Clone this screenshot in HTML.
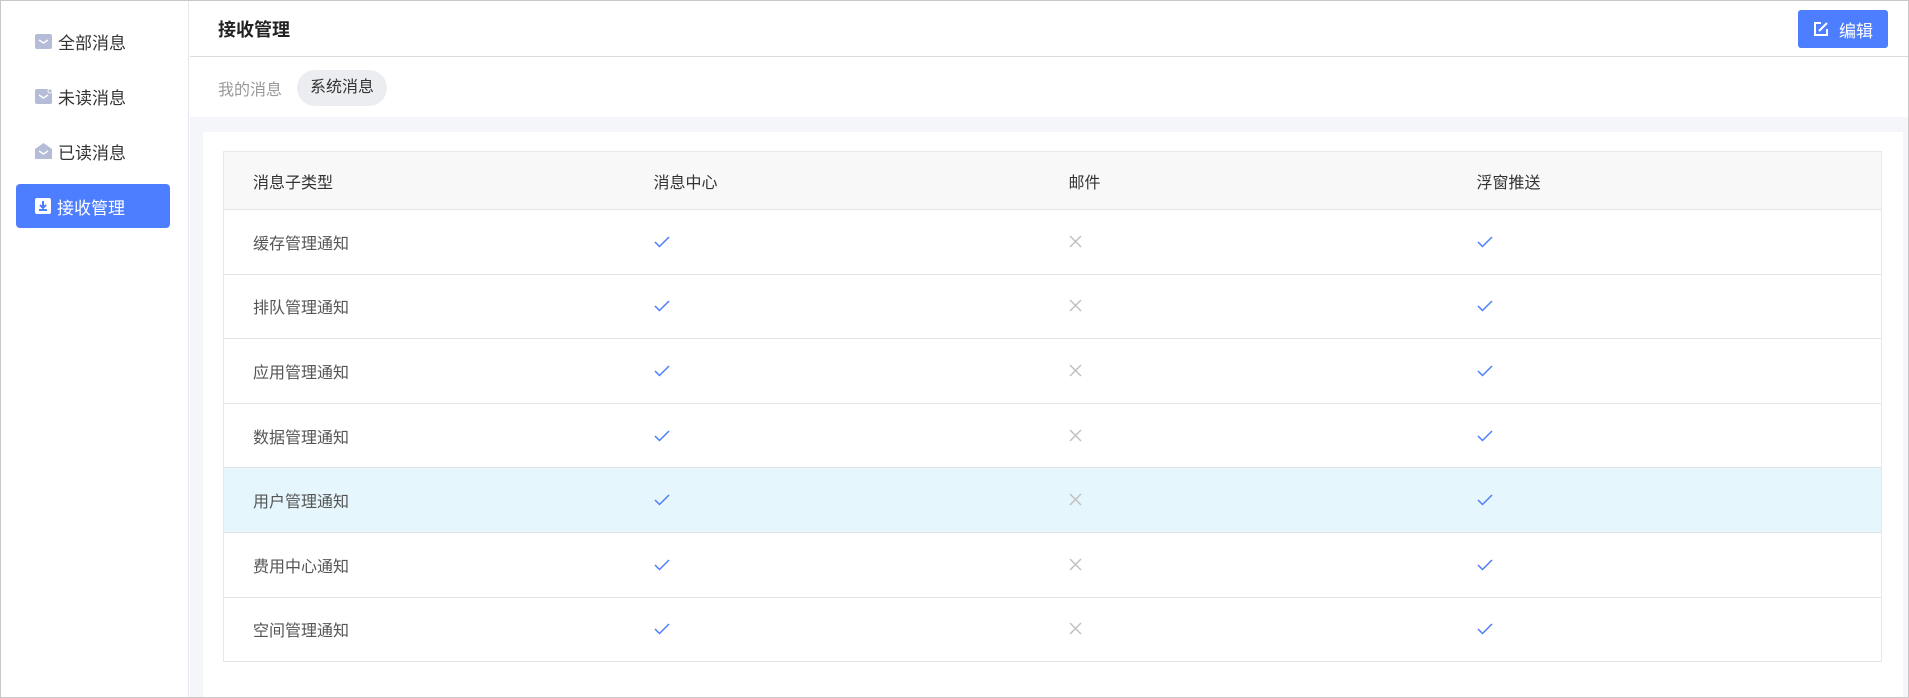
<!DOCTYPE html>
<html><head><meta charset="utf-8"><style>
*{margin:0;padding:0;box-sizing:border-box}
body{width:1909px;height:698px;overflow:hidden;background:#fff;font-family:"Liberation Sans","Noto Sans CJK SC",sans-serif;position:relative}
.frame{position:absolute;left:0;top:0;width:1909px;height:698px;border:1px solid #c8c8c8}
.side{position:absolute;left:1px;top:1px;width:188px;height:696px;border-right:1px solid #e4e7ed;background:#fff}
.item{position:absolute;left:15px;width:154px;height:44px;border-radius:4px;display:flex;align-items:center;padding-left:19px;font-size:17px;color:#333}
.item svg{margin-right:6px}
.item.act{background:#4d7eff;color:#fff}
.hdr{position:absolute;left:190px;top:1px;right:1px;height:56px;border-bottom:1px solid #dcdcdc}
.title{position:absolute;left:28px;top:15px;font-size:18px;font-weight:bold;color:#222}
.btn{position:absolute;left:1608px;top:9px;width:90px;height:38px;background:#4d7eff;border-radius:3px;color:#fff;font-size:17px;display:flex;align-items:center;justify-content:center}
.btn svg{margin-right:10px}
.tabs{position:absolute;left:218px;top:70px;height:36px;display:flex;align-items:center;font-size:16px}
.tabs .t1{color:#999;margin-right:15px}
.tabs .t2{background:#ebedf0;color:#333;border-radius:18px;padding:0 13px;height:36px;line-height:36px}
.band{position:absolute;left:190px;top:117px;right:1px;bottom:1px;background:#f4f6f9}
.card{position:absolute;left:203px;top:132px;width:1700px;bottom:1px;background:#fff}
table{position:absolute;left:223px;top:151px;width:1659px;border-collapse:collapse;border:1px solid #e8e8e8;font-size:16px;color:#555}
th{background:#f8f8f8;font-weight:normal;color:#333;height:58px;text-align:left;border-bottom:1px solid #e4e4e4}
td{height:64.6px;border-bottom:1px solid #e4e4e4}
td svg{position:relative;top:2px}
tr.hl td{background:#e5f6fd}
.c1{padding-left:29px;width:430px}
.c2{width:415px}
.c3{width:408px}
</style></head><body>
<div class="side">
 <div class="item" style="top:18px"><svg width="17" height="15" viewBox="0 0 17 15"><rect width="17" height="15" rx="2" fill="#b4bcd8"/><path d="M4 6l4.5 3 4.5-3" stroke="#fff" stroke-width="1.4" fill="none"/></svg>全部消息</div>
 <div class="item" style="top:73px"><svg width="17" height="15" viewBox="0 0 17 15"><rect width="17" height="15" rx="2" fill="#b4bcd8"/><path d="M4 6l4.5 3 4.5-3" stroke="#fff" stroke-width="1.4" fill="none"/><circle cx="15" cy="2" r="2.5" fill="#fff"/><circle cx="15" cy="2" r="1.6" fill="#b4bcd8"/></svg>未读消息</div>
 <div class="item" style="top:128px"><svg width="17" height="16" viewBox="0 0 17 16"><path d="M0 6L8.5 0 17 6V16H0z" fill="#b4bcd8"/><path d="M4 8l4.5 3 4.5-3" stroke="#fff" stroke-width="1.4" fill="none"/></svg>已读消息</div>
 <div class="item act" style="top:183px"><svg width="16" height="16" viewBox="0 0 16 16"><rect width="16" height="16" rx="2" fill="#fff"/><path d="M8 3v7M5 7l3 3 3-3M4 12h8" stroke="#4d7eff" stroke-width="2" fill="none"/></svg>接收管理</div>
</div>
<div class="hdr"><div class="title">接收管理</div>
<div class="btn"><svg width="16" height="16" viewBox="0 0 16 16"><path d="M8 2H2v12h12V8" stroke="#fff" stroke-width="2" fill="none"/><path d="M6 10l8-8" stroke="#fff" stroke-width="2"/></svg>编辑</div></div>
<div class="tabs"><span class="t1">我的消息</span><span class="t2">系统消息</span></div>
<div class="band"></div>
<div class="card"></div>
<table>
<tr><th class="c1">消息子类型</th><th>消息中心</th><th>邮件</th><th>浮窗推送</th></tr>
<tbody id="b"></tbody>
</table>
<script>
var n=["缓存管理通知","排队管理通知","应用管理通知","数据管理通知","用户管理通知","费用中心通知","空间管理通知"];
var ck='<svg width="16" height="12" viewBox="0 0 16 12"><path d="M1 6l4.5 4.5L15 1" stroke="#4d7eff" stroke-width="1.5" fill="none"/></svg>';
var x='<svg width="13" height="13" viewBox="0 0 13 13"><path d="M1 1l11 11M12 1L1 12" stroke="#c0c0c0" stroke-width="1.5"/></svg>';
var h='';n.forEach(function(s,i){h+='<tr'+(i==4?' class="hl"':'')+'><td class="c1">'+s+'</td><td class="c2">'+ck+'</td><td class="c3">'+x+'</td><td>'+ck+'</td></tr>'});
document.getElementById('b').innerHTML=h;
</script>
<div class="frame"></div>
</body></html>
